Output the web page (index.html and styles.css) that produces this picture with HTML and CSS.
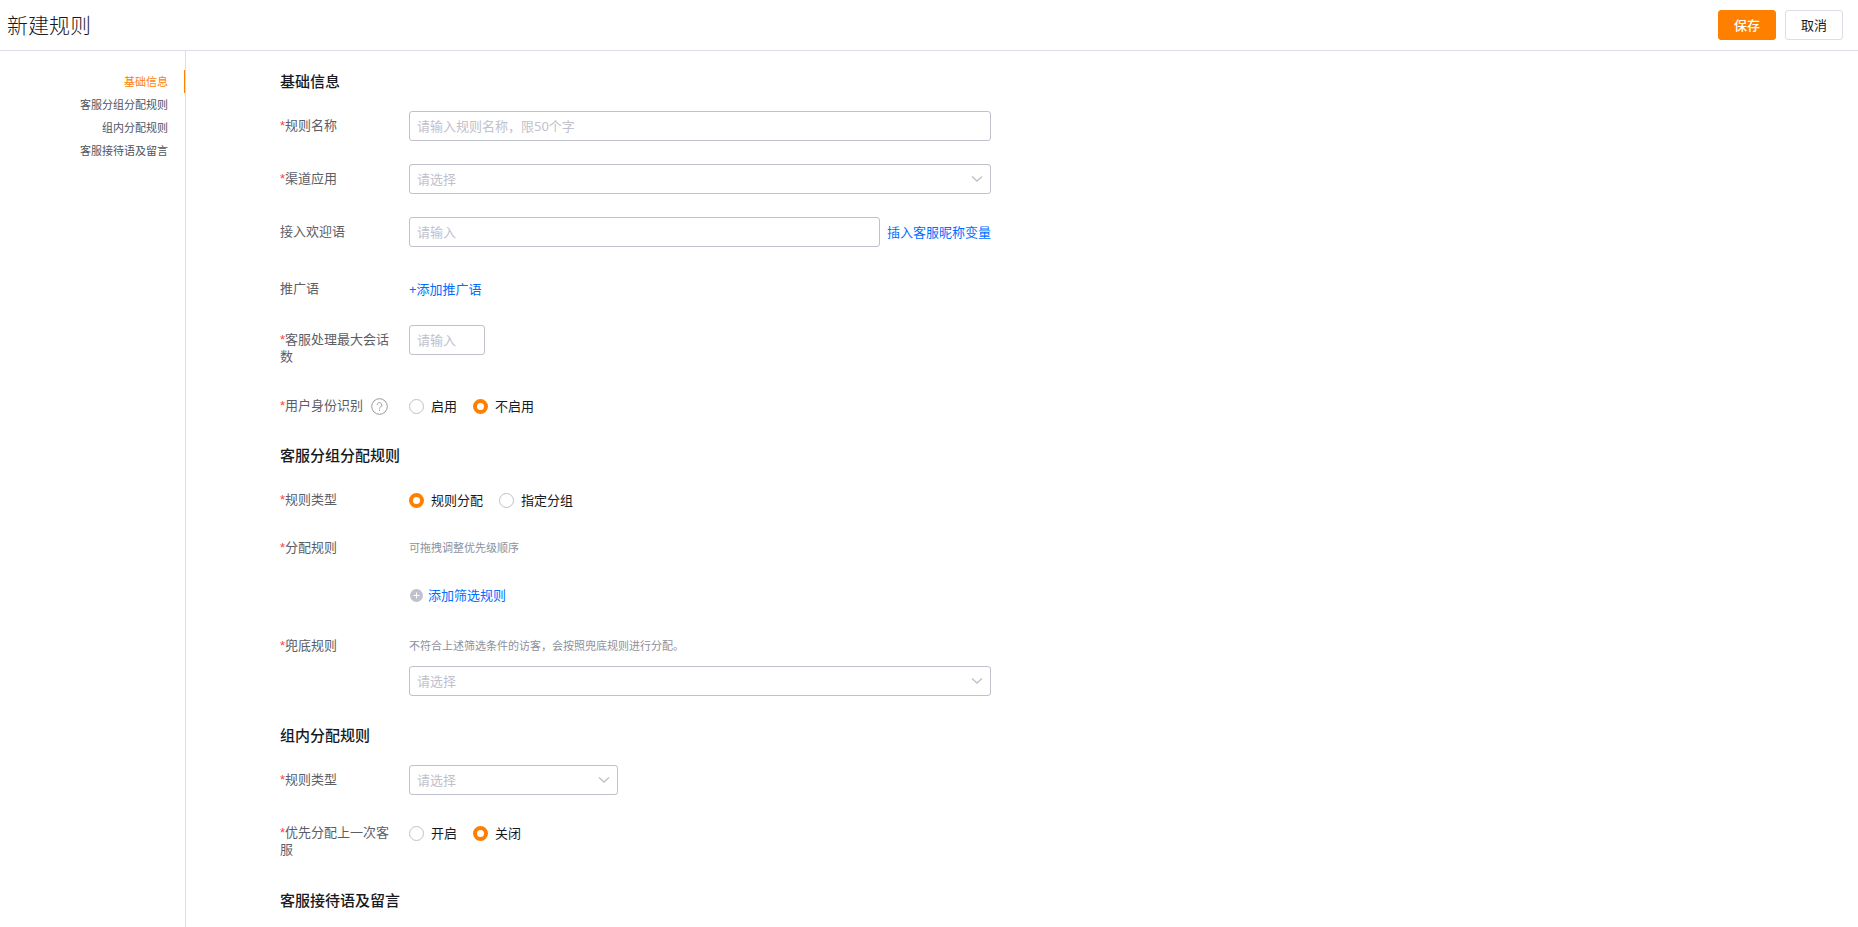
FILE: index.html
```
<!DOCTYPE html>
<html lang="zh-CN">
<head>
  <meta charset="UTF-8">
  <meta name="viewport" content="width=device-width, initial-scale=1">
  <title>新建规则</title>
  <link rel="stylesheet" href="styles.css">
</head>
<body>
  <header class="header">
    <h1 class="header-title">新建规则</h1>
    <div class="header-actions">
      <button type="submit" form="rule-form" class="btn btn-primary">保存</button>
      <button type="button" class="btn">取消</button>
    </div>
  </header>

  <div class="layout">
    <nav class="anchor-nav">
      <a class="anchor-link active" href="#basic">基础信息</a>
      <a class="anchor-link" href="#group">客服分组分配规则</a>
      <a class="anchor-link" href="#inner">组内分配规则</a>
      <a class="anchor-link" href="#message">客服接待语及留言</a>
    </nav>

    <main class="content">
      <form id="rule-form" class="form">
        <!-- 基础信息 -->
        <section id="basic" class="section section-basic">
          <h2 class="section-title">基础信息</h2>
          <div class="row">
            <label class="label" for="rule-name"><span class="required">*</span>规则名称</label>
            <div class="field">
              <input type="text" id="rule-name" class="input" placeholder="请输入规则名称，限50个字">
            </div>
          </div>
          <div class="row">
            <label class="label" for="channel"><span class="required">*</span>渠道应用</label>
            <div class="field">
              <div class="select-wrap">
                <select id="channel" class="input select">
                  <option value="">请选择</option>
                </select>
                <svg class="arrow" viewBox="0 0 12 8"><path d="M1 1.5 6 6l5-4.5"/></svg>
              </div>
            </div>
          </div>
          <div class="row">
            <label class="label" for="welcome">接入欢迎语</label>
            <div class="field field-inline">
              <input type="text" id="welcome" class="input" placeholder="请输入">
              <a class="link" href="#">插入客服昵称变量</a>
            </div>
          </div>
          <div class="row row-promo">
            <span class="label">推广语</span>
            <div class="field field-inline">
              <a class="link" href="#">+添加推广语</a>
            </div>
          </div>
          <div class="row">
            <label class="label" for="max-session"><span class="required">*</span>客服处理最大会话数</label>
            <div class="field">
              <input type="text" id="max-session" class="input input-small" placeholder="请输入">
            </div>
          </div>
          <div class="row">
            <span class="label label-help">
              <span><span class="required">*</span>用户身份识别</span>
              <svg class="help" viewBox="0 0 17 17">
                <circle cx="8.5" cy="8.5" r="7.8"/>
                <path d="M6.2 6.9a2.3 2.3 0 1 1 3.5 2c-.8.5-1.2.9-1.2 1.7M8.5 11.7v1.3"/>
              </svg>
            </span>
            <div class="field radios">
              <label class="radio"><input type="radio" name="identity">启用</label>
              <label class="radio"><input type="radio" name="identity" checked>不启用</label>
            </div>
          </div>
        </section>

        <!-- 客服分组分配规则 -->
        <section id="group" class="section">
          <h2 class="section-title">客服分组分配规则</h2>
          <div class="row">
            <span class="label"><span class="required">*</span>规则类型</span>
            <div class="field radios">
              <label class="radio"><input type="radio" name="group-type" checked>规则分配</label>
              <label class="radio"><input type="radio" name="group-type">指定分组</label>
            </div>
          </div>
          <div class="row row-hint">
            <span class="label"><span class="required">*</span>分配规则</span>
            <div class="field">
              <p class="hint">可拖拽调整优先级顺序</p>
              <a class="link link-add" href="#">
                <svg class="plus" viewBox="0 0 15 15">
                  <circle cx="7.5" cy="7.5" r="6.5"/>
                  <path d="M4.5 7.5h6M7.5 4.5v6"/>
                </svg>添加筛选规则
              </a>
            </div>
          </div>
          <div class="row row-hint">
            <label class="label" for="fallback"><span class="required">*</span>兜底规则</label>
            <div class="field">
              <p class="hint">不符合上述筛选条件的访客，会按照兜底规则进行分配。</p>
              <div class="select-wrap select-below">
                <select id="fallback" class="input select">
                  <option value="">请选择</option>
                </select>
                <svg class="arrow" viewBox="0 0 12 8"><path d="M1 1.5 6 6l5-4.5"/></svg>
              </div>
            </div>
          </div>
        </section>

        <!-- 组内分配规则 -->
        <section id="inner" class="section">
          <h2 class="section-title">组内分配规则</h2>
          <div class="row">
            <label class="label" for="inner-type"><span class="required">*</span>规则类型</label>
            <div class="field">
              <div class="select-wrap select-medium">
                <select id="inner-type" class="input select">
                  <option value="">请选择</option>
                </select>
                <svg class="arrow" viewBox="0 0 12 8"><path d="M1 1.5 6 6l5-4.5"/></svg>
              </div>
            </div>
          </div>
          <div class="row">
            <span class="label"><span class="required">*</span>优先分配上一次客服</span>
            <div class="field radios">
              <label class="radio"><input type="radio" name="last-agent">开启</label>
              <label class="radio"><input type="radio" name="last-agent" checked>关闭</label>
            </div>
          </div>
        </section>

        <!-- 客服接待语及留言 -->
        <section id="message">
          <h2 class="section-title">客服接待语及留言</h2>
        </section>
      </form>
    </main>
  </div>
</body>
</html>
```
FILE: styles.css
```
* {
  box-sizing: border-box;
}
body {
  margin: 0;
  height: 100vh;
  display: flex;
  flex-direction: column;
  font-family: "Noto Sans", "Noto Sans CJK SC", sans-serif;
  font-size: 13px;
  line-height: 17px;
  color: #171a23;
  background: #fff;
}
a {
  text-decoration: none;
}

/* 顶部 */
.header {
  display: flex;
  justify-content: space-between;
  align-items: center;
  flex: none;
  height: 51px;
  padding: 0 15px 0 7px;
  border-bottom: 1px solid #dcdee7;
}
.header-title {
  margin: 0;
  font-size: 21px;
  line-height: 30px;
  font-weight: 300;
}
.header-actions {
  display: flex;
  gap: 9px;
}
.btn {
  height: 30px;
  padding: 0 15px 2px;
  border: 1px solid #dcdee7;
  border-radius: 3px;
  background: #fff;
  color: #171a23;
  font-family: inherit;
  font-size: 13px;
  cursor: pointer;
}
.btn-primary {
  border-color: #ff8000;
  background: #ff8000;
  color: #fff;
  font-weight: 500;
}

/* 左侧锚点 */
.layout {
  flex: 1;
  min-height: 0;
  display: flex;
}
.anchor-nav {
  flex: none;
  width: 186px;
  padding-top: 19px;
  border-right: 1px solid #dcdee7;
}
.anchor-link {
  display: block;
  padding-right: 16px;
  border-right: 1px solid transparent;
  font-size: 11px;
  line-height: 23px;
  text-align: right;
  color: #50535c;
}
.anchor-link.active {
  color: #ff8000;
  border-right-color: #ff8000;
}

/* 表单 */
.content {
  flex: 1;
  overflow: auto;
  padding: 19px 20px 0 94px;
}
.form {
  max-width: 711px;
}
.section {
  margin-bottom: 28px;
}
.section-basic {
  margin-bottom: 23px;
}
.section-title {
  margin: 0 0 19px;
  font-size: 15px;
  line-height: 22px;
  font-weight: 500;
}
.row {
  display: flex;
  margin-bottom: 23px;
}
.row:last-child {
  margin-bottom: 0;
}
.label {
  flex: none;
  width: 129px;
  padding: 6px 12px 3px 0;
  color: #5c5e66;
}
.label-help {
  display: flex;
  gap: 8px;
}
.required {
  font-family: "Liberation Sans", sans-serif;
  line-height: 1;
  color: #ff4040;
}
.help {
  flex: none;
  width: 17px;
  height: 17px;
  margin-top: 1px;
  fill: none;
  stroke: #999;
  stroke-width: 1;
}
.field {
  flex: 1;
  min-width: 0;
}
.field-inline {
  display: flex;
  align-items: center;
  gap: 7px;
}
.row-promo {
  padding-top: 4px;
  margin-bottom: 21px;
  min-height: 34px;
}
.row-hint .label {
  padding-top: 1px;
}
.input {
  display: block;
  width: 100%;
  height: 30px;
  padding: 0 7px;
  border: 1px solid #bfc1cc;
  border-radius: 3px;
  background: #fff;
  font-family: inherit;
  font-size: 13px;
  color: #bfc1cc;
}
.input::placeholder {
  color: #bfc1cc;
  opacity: 1;
}
.input-small {
  width: 76px;
}
.select-wrap {
  position: relative;
}
.select-medium {
  width: 209px;
}
.select-below {
  margin-top: 10px;
}
.select {
  appearance: none;
}
.arrow {
  position: absolute;
  top: 11px;
  right: 8px;
  width: 12px;
  height: 8px;
  fill: none;
  stroke: #bfc1cc;
  stroke-width: 1.4;
  pointer-events: none;
}
.link {
  flex: none;
  color: #006eff;
}
.link-add {
  display: flex;
  align-items: center;
  gap: 4px;
  height: 30px;
  margin: 22px 0 3px;
}
.plus {
  width: 15px;
  height: 15px;
  fill: #bfc1cc;
  stroke: none;
}
.plus path {
  stroke: #fff;
}
.hint {
  margin: 0;
  font-size: 11px;
  line-height: 20px;
  color: #8d909c;
}
.radios {
  display: flex;
  gap: 16px;
  height: 30px;
}
.radio {
  display: flex;
  align-items: center;
  gap: 7px;
}
.radio input {
  appearance: none;
  width: 15px;
  height: 15px;
  margin: 0;
  border: 1px solid #bfc1cc;
  border-radius: 50%;
}
.radio input:checked {
  border: 4px solid #ff8000;
}
```
